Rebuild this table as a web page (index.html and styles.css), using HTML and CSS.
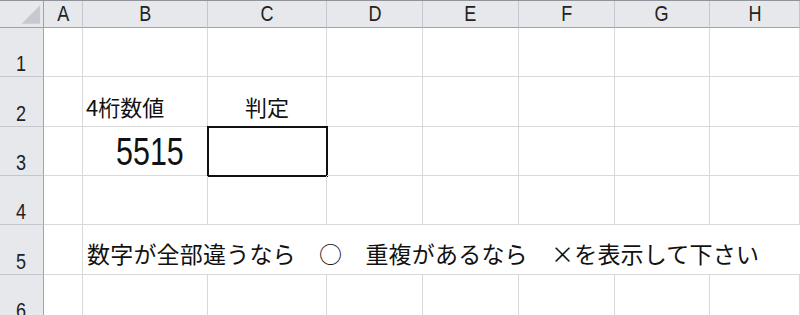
FILE: index.html
```html
<!DOCTYPE html>
<html lang="ja">
<head>
  <meta charset="UTF-8">
  <title>判定シート</title>
  <link rel="stylesheet" href="styles.css">
</head>
<body>
  <div class="sheet">
    <!-- 列見出し -->
    <div class="corner">
      <svg width="44" height="26" viewBox="0 0 44 26"><polygon points="22,23 41,23 41,4" fill="#c6cad0"/></svg>
    </div>
    <div class="col-head"><span>A</span></div>
    <div class="col-head"><span>B</span></div>
    <div class="col-head"><span>C</span></div>
    <div class="col-head"><span>D</span></div>
    <div class="col-head"><span>E</span></div>
    <div class="col-head"><span>F</span></div>
    <div class="col-head"><span>G</span></div>
    <div class="col-head"><span>H</span></div>

    <!-- 1行目 -->
    <div class="row-head"><span>1</span></div>
    <div class="cell"></div><div class="cell"></div><div class="cell"></div><div class="cell"></div>
    <div class="cell"></div><div class="cell"></div><div class="cell"></div><div class="cell"></div>

    <!-- 2行目 -->
    <div class="row-head"><span>2</span></div>
    <div class="cell"></div>
    <div class="cell label">4桁数値</div>
    <div class="cell label center">判定</div>
    <div class="cell"></div><div class="cell"></div><div class="cell"></div><div class="cell"></div><div class="cell"></div>

    <!-- 3行目 -->
    <div class="row-head"><span>3</span></div>
    <div class="cell"></div>
    <div class="cell num"><span>5515</span></div>
    <div class="cell judge"></div>
    <div class="cell"></div><div class="cell"></div><div class="cell"></div><div class="cell"></div><div class="cell"></div>

    <!-- 4行目 -->
    <div class="row-head"><span>4</span></div>
    <div class="cell"></div><div class="cell"></div><div class="cell"></div><div class="cell"></div>
    <div class="cell"></div><div class="cell"></div><div class="cell"></div><div class="cell"></div>

    <!-- 5行目 -->
    <div class="row-head"><span>5</span></div>
    <div class="cell"></div>
    <div class="cell note">数字が全部違うなら　○　重複があるなら　×を表示して下さい</div>

    <!-- 6行目 -->
    <div class="row-head"><span>6</span></div>
    <div class="cell"></div><div class="cell"></div><div class="cell"></div><div class="cell"></div>
    <div class="cell"></div><div class="cell"></div><div class="cell"></div><div class="cell"></div>
  </div>
</body>
</html>
```

FILE: styles.css
```css
html, body {
  margin: 0;
  height: 315px;
  overflow: hidden;
  background-color: #fff;
}

.sheet {
  display: grid;
  grid-template-columns: 44px 39px 125px 119px 96px 96px 96px 95px 1fr;
  grid-template-rows: 27px 49px 50px 49px 49px 50px 49px;
  border-top: 1px solid #8f949a;
  font-family: "Noto Sans CJK JP", sans-serif;
  color: #111;
}

.sheet > div {
  box-sizing: border-box;
  display: flex;
  align-items: flex-end;
  overflow: visible;
}

.corner {
  background-color: #e6e8ec;
  border-right: 1px solid #9ea4ac;
  border-bottom: 1px solid #9ea4ac;
}

.corner svg {
  display: block;
  align-self: flex-start;
}

.col-head {
  background-color: #e6e8ec;
  border-right: 1px solid #c4c8ce;
  border-bottom: 1px solid #9ea4ac;
  justify-content: center;
  padding-bottom: 2px;
}

.row-head {
  background-color: #e6e8ec;
  border-right: 1px solid #9ea4ac;
  border-bottom: 1px solid #c4c8ce;
  justify-content: center;
  padding-bottom: 1px;
}

.col-head span,
.row-head span {
  display: inline-block;
  font-family: "Liberation Sans", sans-serif;
  font-size: 22px;
  line-height: 1;
  color: #222;
  transform: scaleX(0.82);
}

.cell {
  border-right: 1px solid #d9d9d9;
  border-bottom: 1px solid #d9d9d9;
}

.label {
  font-size: 22px;
  line-height: 1;
  padding: 0 0 9px 3px;
}

.center {
  justify-content: center;
  padding-left: 0;
}

.num {
  justify-content: flex-end;
  padding: 0 23px 4px 0;
}

.num span {
  display: inline-block;
  font-family: "Liberation Sans", sans-serif;
  font-size: 39px;
  line-height: 1;
  transform: scaleX(0.78);
  transform-origin: right bottom;
}

.judge {
  outline: 2px solid #111;
  outline-offset: -1px;
}

.note {
  grid-column: 3 / -1;
  white-space: pre;
  font-size: 23px;
  line-height: 1;
  letter-spacing: 0.2px;
  padding: 0 0 9px 4px;
  border-right: none;
}
```
